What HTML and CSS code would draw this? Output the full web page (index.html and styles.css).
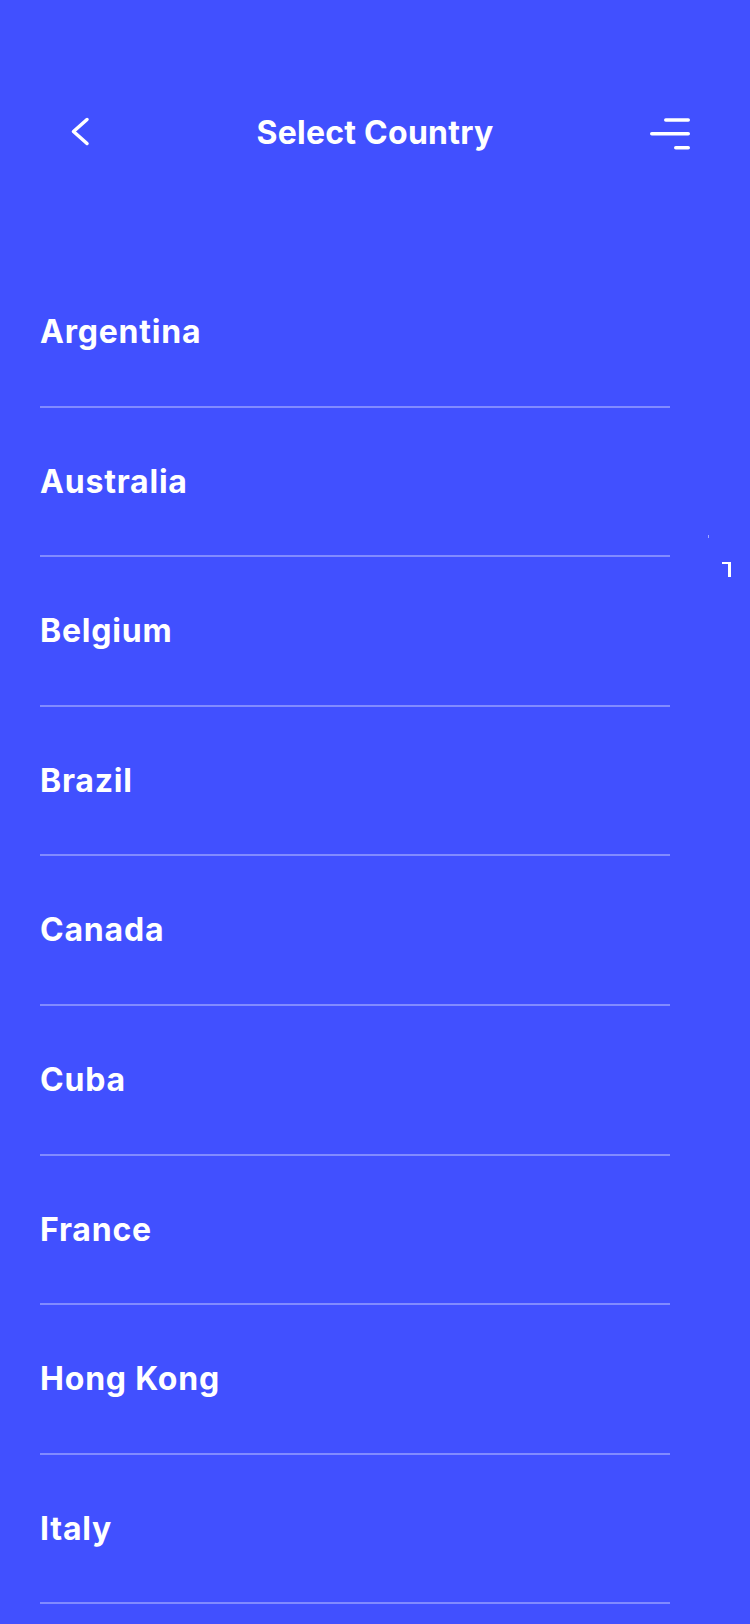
FILE: index.html
```html
<!DOCTYPE html>
<html lang="en">
<head>
<meta charset="utf-8">
<title>Select Country</title>
<link rel="stylesheet" href="styles.css">
</head>
<body>
<div class="screen">
  <header class="topbar">
    <div class="left">
      <svg class="back" width="40" height="40" viewBox="0 0 40 40" aria-hidden="true">
        <polyline points="27,8.5 13.5,20.5 27,32.5" fill="none" stroke="#fff" stroke-width="3.5" stroke-linecap="round" stroke-linejoin="round"/>
      </svg>
    </div>
    <h1 class="title">Select Country</h1>
    <div class="right">
      <svg class="menu" width="50" height="40" viewBox="0 0 50 40" aria-hidden="true">
        <line x1="20.75" y1="9" x2="43.25" y2="9" stroke="#fff" stroke-width="3.5" stroke-linecap="round"/>
        <line x1="6.75" y1="22.7" x2="43.25" y2="22.7" stroke="#fff" stroke-width="3.5" stroke-linecap="round"/>
        <line x1="30.75" y1="36.7" x2="43.25" y2="36.7" stroke="#fff" stroke-width="3.5" stroke-linecap="round"/>
      </svg>
    </div>
  </header>
  <ul class="countries">
    <li class="country">Argentina</li>
    <li class="country">Australia</li>
    <li class="country">Belgium</li>
    <li class="country">Brazil</li>
    <li class="country">Canada</li>
    <li class="country">Cuba</li>
    <li class="country">France</li>
    <li class="country">Hong Kong</li>
    <li class="country">Italy</li>
  </ul>
  <span class="scroll-mark"></span>
  <span class="scroll-dot"></span>
</div>
</body>
</html>
```

FILE: styles.css
```css
html, body {
  margin: 0;
  padding: 0;
  background: #4150ff;
}
.screen {
  position: relative;
  width: 750px;
  height: 1624px;
  overflow: hidden;
  background: #4150ff;
  color: #fff;
  font-family: Inter, "Noto Sans", "Liberation Sans", sans-serif;
}
.topbar {
  height: 258px;
  box-sizing: border-box;
  padding-top: 111px;
  display: grid;
  grid-template-columns: 1fr auto 1fr;
  align-items: start;
}
.left {
  padding-left: 60px;
  display: flex;
}
.right {
  padding-right: 55px;
  display: flex;
  justify-content: flex-end;
}
.back, .menu {
  display: block;
}
.title {
  margin: 0;
  margin-top: 6px;
  font-size: 32px;
  line-height: 32px;
  font-weight: 700;
  letter-spacing: 0.25px;
  white-space: nowrap;
}
.countries {
  list-style: none;
  margin: 0;
  padding: 0 80px 0 40px;
}
.country {
  height: 149.6px;
  box-sizing: border-box;
  padding-top: 58px;
  font-size: 32px;
  line-height: 32px;
  font-weight: 700;
  letter-spacing: 0.8px;
  border-bottom: 2px solid rgba(255, 255, 255, 0.34);
}
.scroll-mark {
  position: absolute;
  left: 722px;
  top: 562px;
  width: 6px;
  height: 13px;
  border-top: 2px solid #fff;
  border-right: 3px solid #fff;
}
.scroll-dot {
  position: absolute;
  left: 708px;
  top: 535px;
  width: 1px;
  height: 3px;
  background: rgba(255, 255, 255, 0.5);
}
```
